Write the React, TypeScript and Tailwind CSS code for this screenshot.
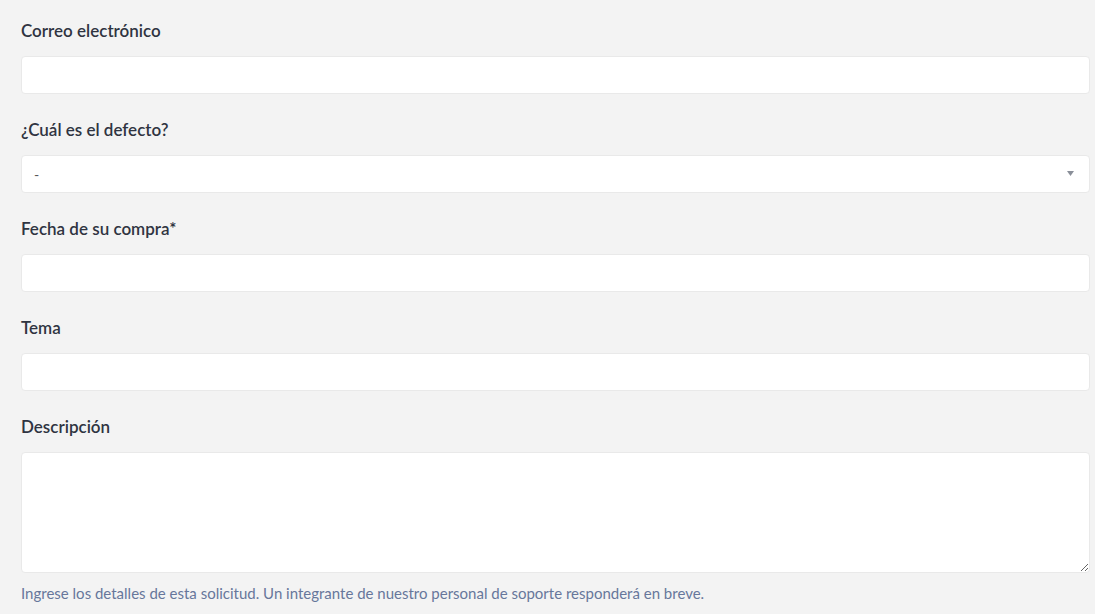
import { ReactNode } from 'react'

const inputCls =
  'block h-[38px] w-full rounded-[4px] border border-[#e9e9e9] bg-white px-3 text-[15px] text-[#333] outline-none'

const labelCls = 'mb-[13px] block text-[17px] font-semibold leading-6 text-[#2f3441]'

function Field({ label, children }: { label: string; children: ReactNode }) {
  return (
    <div className="mb-6">
      <label className={labelCls}>{label}</label>
      {children}
    </div>
  )
}

export default function App() {
  return (
    <div
      className="min-h-[614px] bg-[#f3f3f3] pl-[21px] pr-[5px] pt-[19px]"
      style={{ fontFamily: 'Lato, "Open Sans", sans-serif' }}
    >
      <Field label="Correo electrónico">
        <input type="email" className={inputCls} />
      </Field>

      <Field label="¿Cuál es el defecto?">
        <div className="relative">
          <div className={inputCls + ' flex items-center'}>
            <span className="text-[14px] text-[#555]">-</span>
          </div>
          <svg
            className="absolute right-[16px] top-[16px]"
            width="7"
            height="5"
            viewBox="0 0 7 5"
          >
            <path d="M0 0h7L3.5 5z" fill="#8a8f99" />
          </svg>
        </div>
      </Field>

      <Field label="Fecha de su compra*">
        <input type="text" className={inputCls} />
      </Field>

      <Field label="Tema">
        <input type="text" className={inputCls} />
      </Field>

      <div>
        <label className={labelCls}>Descripción</label>
        <textarea className="block h-[121px] w-full resize-y rounded-[4px] border border-[#e9e9e9] bg-white px-3 py-2 text-[15px] outline-none" />
        <p className="mt-[10px] text-[15px] leading-5 text-[#67779b]">
          Ingrese los detalles de esta solicitud. Un integrante de nuestro personal de soporte responderá en breve.
        </p>
      </div>
    </div>
  )
}
